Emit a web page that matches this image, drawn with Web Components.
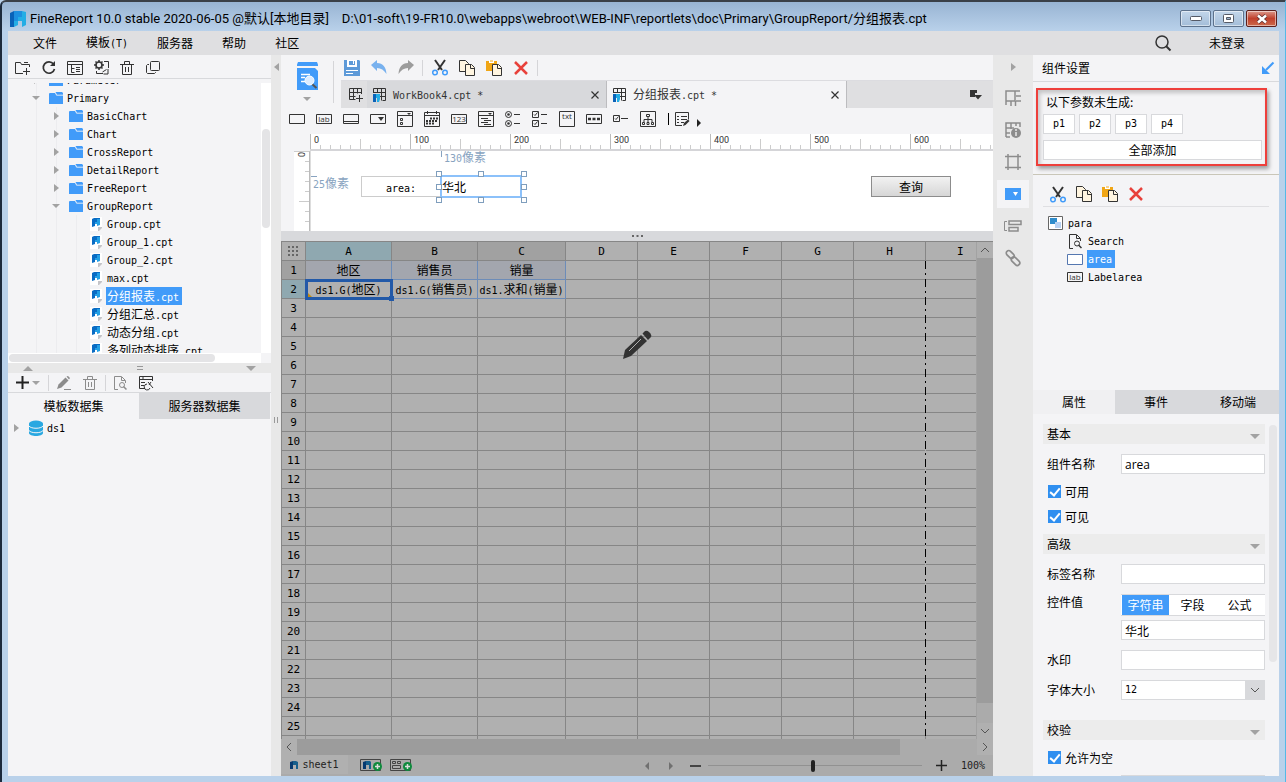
<!DOCTYPE html>
<html lang="zh-CN">
<head>
<meta charset="utf-8">
<title>FineReport 10.0</title>
<style>
html,body{margin:0;height:100%}
body{font:12px/18px "Noto Sans CJK SC",sans-serif;color:#000;background:#b9d1ea;overflow:hidden}
</style>
</head>
<body>
<fr-window></fr-window>
<script>
const BASE = `
*{box-sizing:border-box}
button{font:inherit;color:inherit;background:none;border:0;padding:0;margin:0;display:flex;align-items:center;justify-content:center}
input,select{font:inherit;color:inherit;margin:0;border-radius:0}
.m{font:10px/18px "DejaVu Sans Mono",monospace}
.sep{width:1px;height:16px;background:#d5d5d8;flex:none}
`;
function define(name, css, html) {
  customElements.define(name, class extends HTMLElement {
    connectedCallback() {
      if (this.shadowRoot) return;
      const root = this.attachShadow({mode: 'open'});
      const body = typeof html === 'function' ? html(this) : html;
      root.innerHTML = `<style>${BASE}${css}</style>${body}`;
    }
  });
}
/* Latin runs use the monospaced face, Chinese runs keep the page face */
const mix = s => s.replace(/[\x20-\x7e]+/g, r => `<span class="m">${r}</span>`);

/* ---------- icons ---------- */
const D = '#333', G = '#8c8c8c', B = '#419bf9';
const logo = (x, y, s) => `<g transform="translate(${x} ${y}) scale(${s})"><path d="M0 2 4 0V16H0z" fill="#0a62b8"/><path d="M4 0h8v6H8v4H4z" fill="#1d8fdf"/><path d="M4 10h4V6h4V0l4 1v13l-4 2v-6H8v4l-4 2z" fill="#23ade5"/></g>`;
const mag = (cx, cy, r, c) => `<circle cx="${cx}" cy="${cy}" r="${r}" stroke="${c}"/><path d="M${cx+r-1} ${cy+r-1}l3 3" stroke="${c}" stroke-width="1.5"/>`;
const ICONS = {
  newfolder: [16,14,`<path d="M8 12.5H.5V1.5h5l1 2H14.500V6M11.500 7v7M8 10.500h7M9 1.500h4" stroke="${D}"/>`],
  refresh: [14,15,`<path d="M11.500 4A5.700 5.700 0 1 0 12.500 9" stroke="${D}" stroke-width="1.700"/><path d="M13 1v5H8z" fill="${D}"/>`],
  outline: [16,14,`<path d="M.5.5h15v13H.5zM.5 3.500h15M4.500 4v7.500h3M4.500 7.500h3M9 6.500h4M9 8.500h4M9 10.500h4" stroke="${D}"/>`],
  gear: [15,15,`<circle cx="5" cy="5" r="3" stroke="${D}" stroke-width="1.600"/><path d="M5 0v2M5 8v2M0 5h2M8 5h2M1.500 1.500l1 1M7.500 7.500l1 1M8.500 1.500l-1 1M1.500 8.500l1-1" stroke="${D}" stroke-width="1.500"/><path d="M10 1.500h4.500V8M2.500 11v2.500H9" stroke="${D}"/><path d="M14 9v5H9.500M12.500 9.500l-4 2.500" stroke="${D}"/>`],
  trash: [14,14,`<path d="M0 3.500h14M4.500 3V.5h5V3M2.500 4v9.500h9V4M5.500 6v5M8.500 6v5" stroke="${D}"/>`],
  trashg: [14,14,`<path d="M0 3.500h14M4.500 3V.5h5V3M2.500 4v9.500h9V4M5.500 6v5M8.500 6v5" stroke="${G}"/>`],
  windows: [14,13,`<rect x="4.500" y=".5" width="9" height="9" rx="1" stroke="${D}"/><path d="M3 3.500H1.500l-1 1v7l1 1h7l1-1V11" stroke="${D}"/>`],
  folder: [14,12,`<path d="M0 1.500 1 1h5l1.500 2.500H14V12H0z" fill="${B}"/><path d="M6.500 0H13l1 1v2H8z" fill="${B}"/><path d="M6.500 1 7.500 3H14" stroke="#cfe4fc" stroke-width=".7"/>`],
  file: [12,14,`<path d="M0 0h12v10l-4 4H0z" fill="#fff"/><path d="M12 10v1L9 14H8v-4z" fill="#c4c4c8"/><path d="M2 2 4 1h6v6H7V5H5v4L2 10z" fill="#0a6cc4"/><path d="M5 5h2V2h3v6L7 9V7H5z" fill="#23a0e5"/>`],
  down: [8,4,`<path d="M0 0h8L4 4z" fill="#a2a2a2"/>`],
  up: [10,5,`<path d="M0 5h10L5 0z" fill="#a2a2a2"/>`],
  right: [5,8,`<path d="M0 0v8l5-4z" fill="#a2a2a2"/>`],
  left: [5,8,`<path d="M5 0v8L0 4z" fill="#a2a2a2"/>`],
  down5: [10,5,`<path d="M0 0h10L5 5z" fill="#a2a2a2"/>`],
  rightd: [4,8,`<path d="M0 0v8l4-4z" fill="#222"/>`],
  leftg: [4,8,`<path d="M4 0v8L0 4z" fill="#707070"/>`],
  rightg: [4,8,`<path d="M0 0v8l4-4z" fill="#707070"/>`],
  plus: [13,13,`<path d="M6.500 0v13M0 6.500h13" stroke="#222" stroke-width="2"/>`],
  pencil: [14,14,`<path d="M0 13 1.500 8.500 8.500 1.500l3 3-7 7z" fill="${G}"/><path d="M9.500 .5 11 0l2 2-1 1.500z" fill="${G}"/><path d="M7 13.500h7" stroke="${G}"/>`],
  docmag: [13,14,`<path d="M4 13.500H.5V.5h7l4 4V7M7.500 1v3.500H11" stroke="${G}"/>${mag(8,9,2.5,G)}`],
  docmagd: [13,15,`<path d="M4 14.500H.5V.5h7l4 4V7M7.500 1v3.500H11" stroke="${D}"/>${mag(8,9.5,2.5,D)}`],
  dsedit: [15,13,`<path d="M6 12.500H.5V.5h13V5M.5 3.500h13M2 6.500h4M2 9.500h3M3 2h2" stroke="${D}"/><path d="M8 8a3 3 0 1 0 3 4M9 6l5 6M12 6l-2 3" stroke="${D}"/>`],
  db: [16,16,`<path d="M1 3.500v9.500c0 4 14 4 14 0V3.500z" fill="#29a8e1"/><ellipse cx="8" cy="3.500" rx="7" ry="3" fill="#29a8e1"/><path d="M1 6c2 3 12 3 14 0M1 10.500c2 3 12 3 14 0" stroke="#f4f4f6"/>`],
  logo: [16,16,logo(0,0,1)],
  logos: [8,8,`<path d="M0 1 3 0v8H0z" fill="#073a70"/><path d="M3 0h3l2 1v7H6V4H3z" fill="#175f8c"/>`],
  search: [16,16,`<circle cx="7" cy="7" r="6" stroke="${D}" stroke-width="1.500"/><path d="M11 11l4.500 4.500" stroke="${D}" stroke-width="2"/>`],
  preview: [21,28,`<path d="M0 2.500 1 0h19l1 2.500V4H0z" fill="${B}"/><path d="M0 6h18l3 3v19H0z" fill="${B}"/><path d="M4 12.500h9M4 15.500h4M4 19.500h4" stroke="#fff" stroke-width="1.500"/><path d="M15 22l4.500 4" stroke="#555" stroke-width="2"/><circle cx="12.500" cy="18.500" r="4.500" fill="#dcecff" stroke="#fff"/>`],
  save: [16,16,`<path d="M0 0h15l1 1v15H0z" fill="#5e9ad8"/><path d="M3 0h10v7H3z" fill="#fff"/><path d="M5 1h6v4H5z" fill="#5e9ad8"/><path d="M9 1h1v3H9z" fill="#fff"/><path d="M2 10.500h12M2 13.500h7" stroke="#fff"/>`],
  undo: [16,15,`<path d="M0 5 6 0v3c6 0 9 4 9.500 11C13 10 10 8 6 8v3z" fill="#78b1ee"/>`],
  redo: [16,15,`<path d="M16 5 10 0v3C4 3 1 7 .5 14 3 10 6 8 10 8v3z" fill="#9c9c9c"/>`],
  cut: [16,17,`<path d="M3 1l7 10M13 1 6 11" stroke="${D}" stroke-width="2"/><circle cx="3" cy="13.500" r="2.300" stroke="${B}" stroke-width="1.500"/><circle cx="13" cy="13.500" r="2.300" stroke="${B}" stroke-width="1.500"/>`],
  copy: [16,16,`<path d="M.5.5h6l3 3v8H.5z" fill="#fff5e0" stroke="${D}"/><path d="M6.500 4.500h6l3 3v8h-9z" fill="#fff5e0" stroke="${D}"/><path d="M11.500 5v3.500h4" stroke="${D}"/>`],
  paste: [16,16,`<path d="M0 1h11v10H0z" fill="#f0a616"/><path d="M3 0h5v3H3z" fill="#fff"/><path d="M4 1h3" stroke="#f0a616"/><path d="M6.500 4.500h6l3 3v8h-9z" fill="#fff5e0" stroke="${D}"/><path d="M11.500 5v3.500h4" stroke="${D}"/>`],
  del: [14,14,`<path d="M1 1l12 12M13 1 1 13" stroke="#e8413b" stroke-width="2.500"/>`],
  gridplus: [14,14,`<path d="M.5.5h12V6M.5.5v11h6M.5 4.500h12M.5 8.500h6M4.500.5v11M8.500.5v5" stroke="${D}"/><path d="M10.500 7v7M7 10.500h7" stroke="${D}"/>`],
  cpt: [14,14,`<path d="M.5 5V.5h12v12h-3M.5 4.500h12M5 8.500h8M4.500.5v4M8.500.5v12" stroke="${D}"/><path d="M0 6h3v8H0z" fill="#0a62b8"/><path d="M3 6h4v5l-1 3H4v-4H3z" fill="#23ade5"/>`],
  close: [8,8,`<path d="M.5.5l7 7M7.500.5l-7 7" stroke="${D}" stroke-width="1.200"/>`],
  tablist: [12,10,`<path d="M0 0h7v3H5v4H0z" fill="${D}"/><path d="M4 5h8L8 9.500z" fill="${D}"/>`],
  wText: [16,10,`<path d="M.5.5h15v9H.5z" stroke="${D}"/>`],
  wTextB: [16,11,`<path d="M.5.5h15v10H.5z" fill="#fff" stroke="#5577b0"/>`],
  wLab: [16,10,`<path d="M.5.5h15v9H.5z" stroke="${D}"/><text x="8" y="8" text-anchor="middle" font-family="Open Sans" font-size="8" fill="${D}">lab</text>`],
  wBtn: [16,10,`<path d="M.5.5h15v9H.5zM.5 7.500h15" stroke="${D}"/>`],
  wCombo: [16,10,`<path d="M.5.5h15v9H.5z" stroke="${D}"/><path d="M8 3h6l-3 4z" fill="${D}"/>`],
  wCheckCombo: [16,16,`<path d="M.5.5h15v15H.5zM.5 4.500h15M3.500 7.500h2v2h-2zM3.500 11.500h2v2h-2z" stroke="${D}"/><path d="M10 2h4l-2 2z" fill="${D}"/>`],
  wDate: [16,16,`<path d="M.5 1.500h15v14H.5zM.5 4.500h15M3.500 0v3M12.500 0v3" stroke="${D}"/><path d="M6 7.500h8M2 10h12M2 12.500h9" stroke="${D}" stroke-width="2" stroke-dasharray="2 1"/>`],
  wNum: [16,10,`<path d="M2 .5H.5v9H2M14 .5h1.500v9H14M2 .5h12M2 9.500h12" stroke="${D}"/><text x="8" y="8" text-anchor="middle" font-family="Open Sans" font-size="8" fill="${D}">123</text>`],
  wTreeCombo: [16,16,`<path d="M.5.5h15v15H.5zM.5 4.500h15M3 7.500h7M6 9.500h7M3 11.500h7M6 13.500h7" stroke="${D}"/><path d="M10 2h4l-2 2z" fill="${D}"/>`],
  wRadio: [15,16,`<circle cx="3.500" cy="3.500" r="3" stroke="${D}"/><circle cx="3.500" cy="3.500" r="1.300" fill="${D}"/><circle cx="3.500" cy="12.500" r="3" stroke="${D}"/><circle cx="3.500" cy="12.500" r="1.300" fill="${D}"/><path d="M9 3.500h6M9 12.500h6" stroke="${D}"/>`],
  wChecks: [15,16,`<path d="M.5.5h6v6h-6zM.5 9.500h6v6h-6zM2 3.500l1 1 2.500-3M2 12.500l1 1 2.500-3M9 3.500h6M9 12.500h6" stroke="${D}"/>`],
  wArea: [16,16,`<path d="M.5.5h15v15H.5z" stroke="${D}"/><text x="8" y="8" text-anchor="middle" font-family="Open Sans" font-size="8" fill="${D}">txt</text>`],
  wPass: [16,10,`<path d="M.5.5h15v9H.5z" stroke="${D}"/><path d="M2 5h3M6.500 5h3M11 5h3" stroke="${D}" stroke-width="2.500"/>`],
  wCheck: [15,8,`<path d="M.5.5h6v6h-6zM2 3.500l1 1 2.500-3M8 3.500h7" stroke="${D}"/>`],
  wTree: [16,16,`<path d="M.5.5h15v15H.5zM6.500 3.500h3v2h-3zM8 6v3M4 11V8.500h8V11M8 8v3M2.500 11.500h2v2h-2zM7 11.500h2v2H7zM11.500 11.500h2v2h-2z" stroke="${D}"/>`],
  wMore: [15,15,`<path d="M7 13.500H.5V.5h13v7M2 4.500h2M2 7.500h2M2 10.500h2M6 4.500h6M6 7.500h6M6 10.500h3" stroke="${D}"/><path d="M8 14l1-3 4-3.500 1.500 1.500-4 4z" fill="${D}"/>`],
  rGrid: [16,16,`<path d="M1 15V1h14M1 11h9V1M11 6h5M11 11h5M6 11v5M10.500 11v5" stroke="${G}" stroke-width="1.500"/>`],
  rInfo: [16,16,`<path d="M1 15V1h14v4M1 6h8M1 11h4M6 1v6M11 1v3M1 15h4" stroke="${G}" stroke-width="1.500"/><circle cx="11" cy="11" r="5" fill="${G}"/><path d="M11 10v4M11 7v2" stroke="#e8e8e8" stroke-width="1.500"/>`],
  rFrame: [16,16,`<path d="M3 0v16M13 0v16M0 2.500h16M0 13.500h16" stroke="${G}" stroke-width="1.500"/>`],
  rWidget: [16,12,`<path d="M0 0h16v12H0z" fill="${B}"/><path d="M8 4h5l-2.500 4z" fill="#fff"/>`],
  rLayout: [18,12,`<path d="M3 1.500H.5v9H3" stroke="${G}"/><path d="M5 1h12v3.500H5zM5 7.500h9V11H5z" stroke="${G}" stroke-width="1.500"/>`],
  rLink: [16,16,`<g transform="rotate(45 8 8)" stroke="${G}" stroke-width="1.700"><rect x="-1" y="5" width="9" height="5" rx="2.500"/><rect x="7" y="6" width="10" height="5" rx="2.500"/></g>`],
  popout: [12,12,`<path d="M11.500.5 4 8" stroke="${B}" stroke-width="2"/><path d="M0 4v8h8z" fill="${B}"/>`],
  para: [15,14,`<path d="M.5.5h14v13H.5z" fill="#fff" stroke="#666"/><path d="M2 2h7v6H2z" fill="#2f8ccb"/><path d="M7 6h6v6H7z" fill="#b8d2f3"/>`],
  chevD: [10,6,`<path d="M1 1l4 4 4-4" stroke="#555"/>`],
  chevU: [10,6,`<path d="M1 5l4-4 4 4" stroke="#555"/>`],
  chevL: [6,10,`<path d="M5 1 1 5l4 4" stroke="#555"/>`],
  chevR: [6,10,`<path d="M1 1l4 4-4 4" stroke="#555"/>`],
  bigpencil: [30,30,`<path d="M1 29 3 20 19 5l6 6L9 26z" fill="#333"/><path d="M20.500 3.500 23 1q2-1 4 1l1.500 1.500q1.500 2 0 4L26 10z" fill="#333"/><path d="M7 21 19 9" stroke="#b0b0b0"/>`],
  addSheet: [22,13,`<path d="M.5.5h20v11H.5z" stroke="#444"/><path d="M3 3l3-1v8H3z" fill="#073a70"/><path d="M6 2h4l1 1v7H9V6H6z" fill="#175f8c"/><circle cx="17.500" cy="7.500" r="4.500" fill="#0f8a3d"/><path d="M17.500 5v5M15 7.500h5" stroke="#ddd" stroke-width="1.500"/>`],
  addForm: [22,13,`<path d="M.5.5h20v11H.5zM2.500 2.500h3v2h-3zM7.500 2.500h3v2h-3zM2.500 6.500h8v3h-8z" stroke="#444"/><circle cx="17.500" cy="7.500" r="4.500" fill="#0f8a3d"/><path d="M17.500 5v5M15 7.500h5" stroke="#ddd" stroke-width="1.500"/>`],
  minus: [11,2,`<path d="M0 1h11" stroke="#222" stroke-width="1.500"/>`],
  add: [11,11,`<path d="M5.500 0v11M0 5.500h11" stroke="#222" stroke-width="1.500"/>`],
  dots: [11,9,[0,4,8].map(y=>[0,4,8].map(x=>`<path d="M${x} ${y}h2v2h-2z" fill="#666"/>`).join('')).join('')],
  grip: [11,3,`<path d="M0 0h2v2H0zM4.500 0h2v2h-2zM9 0h2v2H9z" fill="#666"/>`],
  eq: [6,4,`<path d="M0 .5h6M0 3.500h6" stroke="#999"/>`],
  bars: [4,6,`<path d="M.5 0v6M3.500 0v6" stroke="#999"/>`],
  winMin: [12,6,`<rect x=".5" y=".5" width="11" height="4" rx="1" fill="#fff" stroke="#555a66"/>`],
  winMax: [12,9,`<rect x=".5" y=".5" width="10" height="8" rx="1" fill="#fff" stroke="#555a66"/><path d="M3.500 3.500h4v2h-4z" fill="#9ab3cc" stroke="#555a66"/>`],
  winClose: [12,10,`<path d="M2 1.500l8 7M10 1.500l-8 7" stroke="#5a3030" stroke-width="4"/><path d="M2 1.500l8 7M10 1.500l-8 7" stroke="#fff" stroke-width="2.500"/>`],
};
define('fr-icon', ':host{display:block;flex:none;line-height:0}svg{display:block;overflow:visible}', el => {
  const [w, h, body] = ICONS[el.getAttribute('name')];
  return `<svg width="${w}" height="${h}" viewBox="0 0 ${w} ${h}" fill="none" aria-hidden="true">${body}</svg>`;
});
const ic = n => `<fr-icon name="${n}"></fr-icon>`;
const tool = (n, label = n) => `<button type="button" aria-label="${label}">${ic(n)}</button>`;

/* ---------- tree row ---------- */
define('tree-row', `
:host{display:flex;align-items:center;height:18px;padding-left:calc(var(--depth)*20px);white-space:nowrap}
.arrow{width:16px;display:grid;place-items:center}
.pic{width:16px;margin-left:4px;display:grid;place-items:center}
.label{margin-left:var(--label-gap,2px);padding:0 3px 0 1px;height:18px;line-height:18px}
.latin,.latin .m{line-height:16px}
:host([selected]) .label{background:#419bf9;color:#fff}
`, el => {
  const a = el.getAttribute('arrow'), label = el.getAttribute('label');
  const latin = /^[\x20-\x7e]+$/.test(label) ? ' latin' : '';
  return `<span class="arrow">${a ? ic(a) : ''}</span><span class="pic">${ic(el.getAttribute('icon'))}</span><span class="label${latin}">${mix(label)}</span>`;
});
const row = (d, icon, label, arrow = '', sel = '') =>
  `<tree-row style="--depth:${d}" icon="${icon}" label="${label}" arrow="${arrow}" ${sel}></tree-row>`;

/* ---------- left side ---------- */
define('template-panel', `
:host{display:flex;flex-direction:column;width:263px;flex:none;background:#f4f4f6;min-height:0}
.tools{display:flex;align-items:center;height:24px;padding:2px 2px 0;border-bottom:1px solid #d8d9dc;flex:none}
.tools button{width:26px;height:20px}
.tree{height:280px;margin-top:4px;display:grid;grid-template:minmax(0,1fr) 10px/minmax(0,1fr) 10px;flex:none}
.rows{overflow:hidden;background:linear-gradient(#ececef,#ececef) 28px 0/1px 100% no-repeat,linear-gradient(#ececef,#ececef) 48px 24px/1px 100% no-repeat,linear-gradient(#ececef,#ececef) 68px 132px/1px 100% no-repeat}
.rows>div{margin-top:-12px}
.v{background:#fff}.v i{display:block;margin:46px 1px 0;height:99px;border-radius:4px;background:#e4e4e6}
.h{background:#fff}.h i{display:block;width:206px;height:8px;margin:1px;border-radius:4px;background:#e4e4e6}
.split{height:10px;background:#e8e8e8;display:flex;justify-content:space-between;align-items:center;padding:0 15px;flex:none}
.ds{display:flex;align-items:center;height:20px;border-bottom:1px solid #d8d9dc;flex:none;padding-left:8px;gap:12px}
.ds .add{gap:3px;width:24px;justify-content:flex-start}
.ds button{flex:none}
.ds .sep{margin:0 -4px}
.tabs{display:flex;height:26px;flex:none;padding-right:1px}
.tabs button{flex:1}.tabs button+button{background:#d8d9dc}
`, `
<div class="tools">${['newfolder','refresh','outline','gear','trash','windows'].map(n=>tool(n)).join('')}</div>
<div class="tree"><div class="rows"><div>
${row(1,'folder','Parameter','right')}${row(1,'folder','Primary','down')}
${['BasicChart','Chart','CrossReport','DetailReport','FreeReport'].map(n=>row(2,'folder',n,'right')).join('')}
${row(2,'folder','GroupReport','down')}
${['Group.cpt','Group_1.cpt','Group_2.cpt','max.cpt'].map(n=>row(3,'file',n)).join('')}
${row(3,'file','分组报表.cpt','','selected')}
${['分组汇总.cpt','动态分组.cpt','多列动态排序.cpt'].map(n=>row(3,'file',n)).join('')}
</div></div><div class="v"><i></i></div><div class="h"><i></i></div><div></div></div>
<div class="split">${ic('up')}${ic('eq')}${ic('down5')}</div>
<div class="ds"><button type="button" class="add" aria-label="add">${ic('plus')}${ic('down')}</button><span class="sep"></span>
${tool('pencil')}${tool('trashg')}<span class="sep"></span>${tool('docmag')}${tool('dsedit')}</div>
<div class="tabs" role="tablist"><button role="tab">模板数据集</button><button role="tab">服务器数据集</button></div>
<div class="list">${row(0,'db','ds1','right')}</div>
`);
define('side-splitter', `
:host{display:flex;flex-direction:column;align-items:center;justify-content:space-between;width:10px;flex:none;background:#e8e8e8;padding:8px 0 353px}
`, `${ic('left')}${ic('bars')}`);

/* ---------- centre: toolbars and tabs ---------- */
define('editor-toolbar', `
:host{display:grid;grid-template:25px 28px 26px/60px minmax(0,1fr);flex:none;background:#f4f4f6}
.preview{grid-row:1/3;display:flex;align-items:center;justify-content:space-between}
.preview button{width:52px;flex-direction:column;gap:7px}
.preview .sep{height:42px;margin-right:7px}
.std{display:flex;align-items:center}
.std button{width:27px;height:24px}
.std .sep{margin:0 3px}
.std button:first-child{margin-left:-3px}
.tabs{display:flex;align-items:stretch;background:#dfdfe1;border-top:1px solid #dcdce0}
.new{width:26px;padding-left:4px}
.tab{display:flex;align-items:center;width:240px;padding:0 7px 0 6px;gap:6px;background:#d8d9dc;color:#333;border-right:1px solid #bcbcbf}
.tab span{white-space:nowrap}.tab button{margin-left:auto}
.tab.on{background:#f4f4f6}
.list{margin-left:auto;width:34px}
.wid{grid-column:1/3;display:flex;align-items:center;padding:0 0 4px 2px}
.wid button{width:27px;height:20px;flex:none}
.bar{width:1px;height:12px;background:#000;margin:0 0 0 7px}
.wid .play{width:6px;padding-top:7px}
`, `
<div class="preview"><button type="button" aria-label="preview">${ic('preview')}${ic('down')}</button><span class="sep"></span></div>
<div class="std">${tool('save')}${tool('undo')}${tool('redo')}<span class="sep"></span>${tool('cut')}${tool('copy')}${tool('paste')}${tool('del')}<span class="sep"></span></div>
<div class="tabs"><button type="button" class="new" aria-label="new">${ic('gridplus')}</button>
<div class="tab">${ic('cpt')}<span>${mix('WorkBook4.cpt *')}</span>${tool('close')}</div>
<div class="tab on">${ic('cpt')}<span>${mix('分组报表.cpt *')}</span>${tool('close')}</div>
<button type="button" class="list" aria-label="tabs">${ic('tablist')}</button></div>
<div class="wid">${['wText','wLab','wBtn','wCombo','wCheckCombo','wDate','wNum','wTreeCombo','wRadio','wChecks','wArea','wPass','wCheck','wTree'].map(n=>tool(n)).join('')}<span class="bar"></span>${tool('wMore')}<button type="button" class="play" aria-label="more">${ic('rightd')}</button></div>
`);

define('form-canvas', `
:host{display:grid;grid-template:17px 80px/29px minmax(0,1fr);flex:none;background:#f4f4f6}
.top{grid-column:2;display:flex;overflow:hidden;border-bottom:2px solid #d5d5d8;background:#fff}
.top span{width:100px;flex:none;padding-left:3px;font:9px/12px Roboto,sans-serif;color:#333;border-left:1px solid #bbb;
 background:repeating-linear-gradient(90deg,transparent 0 9px,#ccc 9px 10px) 0 100%/100% 4px no-repeat,linear-gradient(#ccc,#ccc) 49px 100%/1px 10px no-repeat}
.side{grid-column:1;margin-left:13px;border-right:1px solid #bbb;background:repeating-linear-gradient(transparent 0 9px,#ccc 9px 10px) 100% 0/4px 100% no-repeat,linear-gradient(#ccc,#ccc) 100% 49px/10px 1px no-repeat,#fff;
 font:9px/9px Roboto,sans-serif;color:#333;border-top:1px solid #ccc}
.side span{writing-mode:vertical-rl;display:block;margin-left:2px;height:6px;line-height:9px}
.area{grid-column:2;position:relative;background:#fff;border-left:1px solid #ddd;overflow:hidden}
.area>*{position:absolute}
.hint{color:#88a3c0;line-height:12px;white-space:nowrap;border-left:1px solid #88a3c0;height:6px;padding-left:2px}
.hint span{line-height:12px}
.hx{left:130px;top:0}.hy{left:0;top:25px;border-left:0;border-top:1px solid #88a3c0;width:6px}
.lab{left:50px;top:25px;width:80px;height:21px;border:1px solid #ccc;text-align:center;line-height:19px}
.lab .m{line-height:19px}
input{left:129px;top:24px;width:82px;height:23px;border:2px solid #8cc1fa;padding:0;background:#fff;outline:0}
.k{width:6px;height:6px;border:1px solid #7f9ebd;background:#fff}
.q{left:560px;top:25px;width:80px;height:21px;border:1px solid #8c8c8c;background:linear-gradient(#f2f2f2,#d6d6d6)}
`, `
<div class="top">${[0,100,200,300,400,500,600].map(n=>`<span>${n}</span>`).join('')}</div>
<div class="side"><span>0</span></div>
<div class="area"><div class="hint hx">${mix('130像素')}</div><div class="hint hy">${mix('25像素')}</div>
<label class="lab" for="w">${mix('area:')}</label><input id="w" value="华北" aria-label="area">
${[[125,20],[167,20],[210,20],[125,33],[210,33],[125,46],[167,46],[210,46]].map(([x,y])=>`<i class="k" style="left:${x}px;top:${y}px"></i>`).join('')}
<button type="button" class="q">查询</button></div>
`);

/* ---------- spreadsheet ---------- */
define('report-sheet', `
:host{display:grid;grid-template:minmax(0,1fr) 16px 21px/minmax(0,1fr) 17px;flex:1;min-height:0;position:relative;background:#ababab;border-top:1px solid #868686}
.grid{overflow:hidden;position:relative;background:#b0b0b0;border-left:1px solid #868686}
table{border-collapse:separate;border-spacing:0;table-layout:fixed;width:100%}
th,td{height:19px;padding:0;border-right:1px solid #868686;border-bottom:1px solid #868686;text-align:center;font-weight:400;line-height:18px;white-space:nowrap;overflow:hidden}
td .m{line-height:14px}
th{font:11px/16px "DejaVu Sans Mono",monospace;padding-top:2px}
thead th:last-child{text-align:left;padding-left:31px}
tr>:last-child{border-right:0}
.hot{background:#8fa8b0}.warm{background:#a1a1a1}
.fill{background:#a3a6ae}
.reg{border-color:#6d8cb8}
.corner fr-icon{display:inline-block}
.sel{position:relative;overflow:visible;outline:3px solid #2259a8;outline-offset:-2px;z-index:1}
.sel::after{content:"";position:absolute;right:-3px;bottom:-3px;width:5px;height:5px;background:#2259a8}
.sel::before{content:"";position:absolute;left:2px;bottom:1px;border:2px solid transparent;border-left-color:#c08b12;border-bottom-color:#c08b12}
.page{position:absolute;left:643px;top:19px;bottom:3px;width:1px;background:repeating-linear-gradient(#000 0 8px,#b0b0b0 8px 12px,#000 12px 14px,#b0b0b0 14px 18px)}
.v{display:flex;flex-direction:column;border-left:1px solid #a2a2a2}
.v button,.h button{width:16px;height:16px;background:#b0b0b0;flex:none}
.v i{flex:1;background:#9c9c9c;margin-bottom:20px}
.h{grid-column:1/3;display:flex}
.h i{flex:1;background:#9c9c9c;margin-right:77px}
.bar{grid-column:1/3;display:flex;align-items:center;color:#222}
.tab{height:19px;width:67px;background:#b0b0b0;gap:4px;margin-right:12px;align-self:flex-start}
.bar button{flex:none}
.add{margin-right:8px}
.nav{display:flex;gap:20px;margin-left:auto;margin-right:17px}
input{appearance:none;width:214px;height:12px;margin:0 14px 0 7px;background:linear-gradient(#919191,#919191) 0 50%/100% 1px no-repeat}
input::-webkit-slider-thumb{appearance:none;width:4px;height:12px;border-radius:2px;background:#222}
.pct{margin:0 8px 0 14px}
.pen{position:absolute;left:50%;top:88px;margin-left:-15px;pointer-events:none}
`, () => {
  const cols = 'ABCDEFGHI'.split('');
  const data = {1:['地区','销售员','销量'], 2:['ds1.G(地区)','ds1.G(销售员)','ds1.求和(销量)']};
  let body = '';
  for (let r = 1; r <= 26; r++) {
    body += `<tr><th scope="row" class="${r===1?'warm':r===2?'hot':''}">${r < 26 ? r : ''}</th>` + cols.map((c, i) => {
      const t = data[r] && data[r][i];
      return t ? `<td class="reg ${r===1?'fill':''} ${r===2&&i===0?'sel':''}">${mix(t)}</td>` : '<td></td>';
    }).join('') + '</tr>';
  }
  return `<div class="grid"><table><colgroup>${[24,86,86,88,72,72,72,72,72].map(w=>`<col style="width:${w}px">`).join('')}<col></colgroup>
<thead><tr><th class="corner">${ic('dots')}</th>${cols.map((c,i)=>`<th scope="col" class="${i===0?'hot':i<3?'warm':''}">${c}</th>`).join('')}</tr></thead><tbody>${body}</tbody></table><div class="page"></div></div>
<div class="v">${tool('chevU')}<i></i>${tool('chevD')}</div>
<div class="h">${tool('chevL')}<i></i>${tool('chevR')}</div>
<div class="bar"><button type="button" class="tab">${ic('logos')}<span class="m">sheet1</span></button><button type="button" class="add" aria-label="add sheet">${ic('addSheet')}</button><button type="button" class="add" aria-label="add form">${ic('addForm')}</button>
<div class="nav">${tool('leftg')}${tool('rightg')}</div>${tool('minus')}<input type="range" aria-label="zoom" min="0" max="100" value="49">${tool('add')}<span class="m pct">100%</span></div>
<div class="pen">${ic('bigpencil')}</div>`;
});
define('report-editor', `
:host{display:flex;flex-direction:column;flex:1;min-width:0;min-height:0}
.split{height:10px;flex:none;background:#d8d9dc;display:grid;place-items:center}
`, `<editor-toolbar></editor-toolbar><form-canvas></form-canvas><div class="split">${ic('grip')}</div><report-sheet></report-sheet>`);

/* ---------- right side ---------- */
define('side-rail', `
:host{display:flex;flex-direction:column;align-items:center;width:40px;flex:none;background:#e8e8e8;gap:4px;padding-top:8px}
button{width:32px;height:28px}.on{background:#f4f4f6}
.fold{height:8px;margin-bottom:9px}
`, `<button class="fold" type="button" aria-label="fold">${ic('right')}</button>${tool('rGrid')}${tool('rInfo')}${tool('rFrame')}<button type="button" class="on" aria-label="widget">${ic('rWidget')}</button>${tool('rLayout')}${tool('rLink')}`);

define('prop-group', `
:host{display:flex;align-items:center;justify-content:space-between;height:20px;margin-bottom:10px;padding:0 5px 0 4px;background:#ececec}
fr-icon{padding-top:4px}
`, `<slot></slot>${ic('down5')}`);

define('property-form', `
:host{display:grid;grid-template-columns:minmax(0,1fr) 8px;gap:4px;flex:1;min-height:0;overflow:hidden;padding:10px 2px 0 10px}
.row{display:grid;grid-template-columns:78px minmax(0,1fr);align-items:center;min-height:20px;margin-bottom:10px}
.row>label,.row>span{padding-left:4px}
input[type=text],select{width:100%;height:20px;border:1px solid #d8d9dc;background:#fff;padding:0 3px;outline:0;line-height:18px}
.row .name{font-family:"Open Sans",sans-serif}
.check{display:flex;align-items:center;gap:4px;height:15px;margin-bottom:10px;padding-left:5px}
.check input{appearance:none;width:13px;height:13px;background:#2f8ff0;display:grid;place-items:center}
.check input::after{content:"";width:4px;height:8px;border:solid #fff;border-width:0 2px 2px 0;transform:rotate(40deg);margin-top:-2px}
.seg{display:grid;grid-template-columns:repeat(3,47px);padding-left:1px;height:22px;background:#fff;border:solid #d8d9dc;border-width:1px 0}
.seg button:first-child{background:#419bf9;color:#fff}
.pair{align-items:start}.pair>span{line-height:16px}
.pair input{margin-top:4px;display:block}
.sel{display:grid}.sel>*{grid-area:1/1}.sel select{appearance:none;font:10px/18px "DejaVu Sans Mono",monospace}
.sel b{justify-self:end;width:20px;height:20px;background:#d8d9dc;display:grid;place-items:center;pointer-events:none}
.gap{margin-top:20px;display:flex}
.bar{height:237px;border-radius:4px;background:#e6e6e8;margin-top:1px}
`, `
<div>
<prop-group>基本</prop-group>
<div class="row"><label for="n">组件名称</label><input id="n" class="name" type="text" value="area"></div>
<label class="check"><input type="checkbox" checked>可用</label>
<label class="check"><input type="checkbox" checked>可见</label>
<prop-group>高级</prop-group>
<div class="row"><label for="l">标签名称</label><input id="l" type="text"></div>
<div class="row pair"><span>控件值</span><div><div class="seg"><button type="button">字符串</button><button type="button">字段</button><button type="button">公式</button></div><input type="text" value="华北" aria-label="控件值"></div></div>
<div class="row"><label for="k">水印</label><input id="k" type="text"></div>
<div class="row"><label for="s">字体大小</label><div class="sel"><select id="s"><option>12</option></select><b>${ic('chevD')}</b></div></div>
<prop-group class="gap">校验</prop-group>
<label class="check"><input type="checkbox" checked>允许为空</label>
<div class="row"><span></span><input type="text" aria-label="错误提示"></div>
</div><div class="bar"></div>
`);
define('component-panel', `
:host{display:flex;flex-direction:column;width:246px;flex:none;background:#f4f4f6;min-height:0}
header{display:flex;align-items:center;justify-content:space-between;height:27px;padding:0 5px 0 9px;border-bottom:1px solid #d8d9dc;flex:none}
.params{height:93px;padding:6px 0 0 3px;border-bottom:1px solid #c9c6b8;flex:none}
.box{width:231px;height:78px;border:2px solid #ee3f3b;padding:3px 3px 0 5px;box-shadow:2px 3px 4px rgba(0,0,0,.35),inset 2px 3px 4px rgba(0,0,0,.2)}
.box p{margin:0 0 3px 3px;line-height:18px}
.ps{display:flex;gap:4px;margin-bottom:6px}
.box button{height:20px;border:1px solid #d8d9dc;background:#fff;width:32px}
.box .all{width:100%}
.tools{display:flex;align-items:center;height:32px;margin:0 10px;border-bottom:1px solid #dfdfe2;padding:7px 0 0 2px;flex:none}
.tools button{width:26px}
.tree{height:183px;padding:7px 0 0;flex:none}
.tree tree-row{margin-left:-6px;--label-gap:4px}
.tabs{display:flex;height:24px;flex:none}
.tabs button{flex:1;background:#d8d9dc}.tabs button:first-child{background:#f0f0f2}
`, `
<header>组件设置${ic('popout')}</header>
<div class="params"><div class="box"><p>以下参数未生成:</p><div class="ps">${[1,2,3,4].map(n=>`<button type="button" class="m">p${n}</button>`).join('')}</div><button type="button" class="all">全部添加</button></div></div>
<div class="tools">${tool('cut')}${tool('copy')}${tool('paste')}${tool('del')}</div>
<div class="tree">${row(0,'para','para')}${row(1,'docmagd','Search')}${row(1,'wTextB','area','','selected')}${row(1,'wLab','Labelarea')}</div>
<div class="tabs" role="tablist"><button role="tab">属性</button><button role="tab">事件</button><button role="tab">移动端</button></div>
<property-form></property-form>
`);

/* ---------- window ---------- */
define('title-bar', `
:host{display:flex;align-items:center;height:29px;flex:none;padding:4px 0 0 2px;font:13px/18px Roboto,"Noto Sans CJK SC",sans-serif}
.t{margin-left:4px;white-space:pre}
.path{margin-left:13px}
.w{margin-left:auto;display:flex;gap:2px;margin-right:2px}
.w button{width:31px;height:17px;border:1px solid #5d728c;border-radius:2px;background:linear-gradient(#c3d6ea,#a3bdd8);box-shadow:inset 0 0 0 1px rgba(255,255,255,.5)}
.w .x{background:linear-gradient(#dc9a8c,#c0402c 50%,#cc6a4c);border-color:#5c1f1c}
`, `${ic('logo')}<span class="t">FineReport 10.0 stable 2020-06-05 @默认[本地目录]</span><span class="t path">D:\\01-soft\\19-FR10.0\\webapps\\webroot\\WEB-INF\\reportlets\\doc\\Primary\\GroupReport/分组报表.cpt</span>
<div class="w">${tool('winMin')}${tool('winMax')}<button type="button" class="x" aria-label="close">${ic('winClose')}</button></div>`);
define('menu-bar', `
:host{display:flex;align-items:center;height:24px;flex:none;background:#dfdfe1;padding:0 20px 0 10px}
button{padding:0 14px 0 15px}
.s{margin-left:auto}
.user{margin-left:9px}
`, `${['文件','模板(T)','服务器','帮助','社区'].map(t=>`<button type="button"><span>${mix(t)}</span></button>`).join('')}<button class="s" type="button" aria-label="search">${ic('search')}</button><button type="button" class="user">未登录</button>`);
define('fr-window', `
:host{box-sizing:border-box;display:flex;flex-direction:column;height:100vh;padding:0 6px 6px;border:solid;border-width:2px 1px 0 2px;border-color:#3a4048 #55b9e6 #b9d1ea #1c2a3c;border-top-left-radius:6px;background:linear-gradient(#98b4d3,#b9d1ea 29px)}
main{display:flex;flex:1;min-height:0}
`, `<title-bar></title-bar><menu-bar></menu-bar><main><template-panel></template-panel><side-splitter></side-splitter><report-editor></report-editor><side-rail></side-rail><component-panel></component-panel></main>`);
</script>
</body>
</html>
